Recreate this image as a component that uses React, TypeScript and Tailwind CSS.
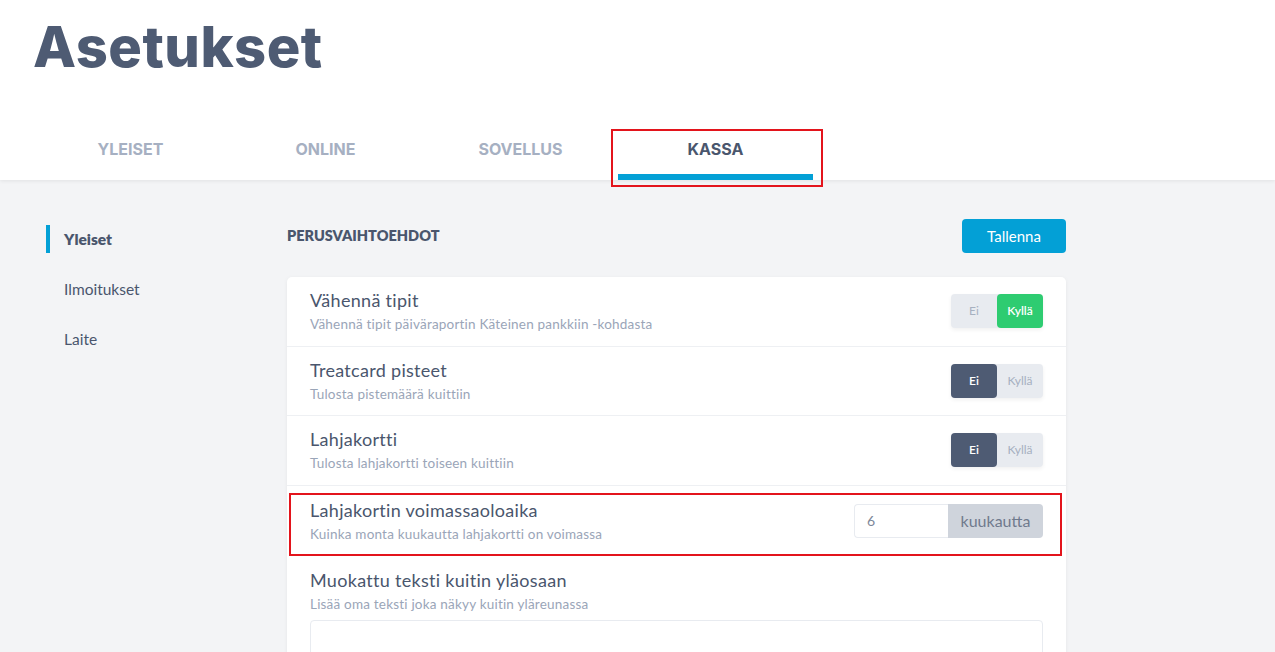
import React from "react";

const Toggle = ({ yes }: { yes: boolean }) => (
  <div className="flex h-[34px] w-[92px] rounded-[4px] bg-[#e8ebf0] text-[12px] shadow-[0_2px_4px_rgba(0,0,0,0.06)]">
    <div
      className={
        "flex w-[46px] items-center justify-center rounded-[4px] " +
        (yes ? "text-[#a6b0c0]" : "bg-[#4e5b73] font-semibold text-white")
      }
    >
      Ei
    </div>
    <div
      className={
        "flex w-[46px] items-center justify-center rounded-[4px] " +
        (yes ? "bg-[#2ecc71] font-semibold text-white" : "text-[#a6b0c0]")
      }
    >
      Kyllä
    </div>
  </div>
);

const Title = ({ children }: { children: React.ReactNode }) => (
  <div className="text-[18px] leading-[22px] tracking-[0.3px] text-[#4a566d]">{children}</div>
);
const Sub = ({ children }: { children: React.ReactNode }) => (
  <div className="mt-[5px] text-[13.5px] leading-[17px] tracking-[0.2px] text-[#9aa5b8]">{children}</div>
);

const Row = ({
  title,
  sub,
  right,
}: {
  title: string;
  sub: string;
  right: React.ReactNode;
}) => (
  <div className="flex h-[69.5px] items-center justify-between border-b border-[#eef0f3] pl-[23px] pr-[23px]">
    <div className="flex flex-col">
      <Title>{title}</Title>
      <Sub>{sub}</Sub>
    </div>
    {right}
  </div>
);

export default function App() {
  return (
    <div
      className="relative h-[652px] w-[1275px] overflow-hidden bg-[#f3f4f6]"
      style={{ fontFamily: "Lato, 'Noto Sans', sans-serif" }}
    >
      <div className="relative z-10 h-[180px] bg-white shadow-[0_1px_4px_rgba(0,0,0,0.08)]">
        <div className="px-[33px] pt-[13px]">
          <h1
            className="text-[56px] font-extrabold leading-[68px] tracking-[0.5px] text-[#4e5b73]"
            style={{ fontFamily: "Inter, 'Noto Sans', sans-serif" }}
          >
            Asetukset
          </h1>
        </div>
        <div className="mt-[49px] flex pl-[33px]" style={{ fontFamily: "Inter, 'Noto Sans', sans-serif" }}>
          {["YLEISET", "ONLINE", "SOVELLUS", "KASSA"].map((t, i) => (
            <div key={t} className="flex h-[50px] w-[195px] flex-col items-center justify-between">
              <div
                className={
                  "pt-[7px] text-[16px] font-bold " +
                  (i === 3 ? "text-[#4a566d]" : "text-[#a6b0c2]")
                }
              >
                {t}
              </div>
              <div className={"h-[6px] w-full " + (i === 3 ? "bg-[#03a0d6]" : "")} />
            </div>
          ))}
        </div>
        <div className="absolute left-[611px] top-[129px] h-[58px] w-[212px] border-2 border-[#e3141c]" />
      </div>

      <div className="flex">
        <div className="w-[287px] shrink-0 pl-[46px] pt-[45px]">
          <div className="flex h-[28px] items-center border-l-[4px] border-[#03a0d6] pl-[14px] pt-[2px] text-[15.5px] font-extrabold text-[#4a566d]">
            Yleiset
          </div>
          <div className="mt-[22px] flex h-[28px] items-center pl-[18px] pt-[2px] text-[15.5px] text-[#4a566d]">
            Ilmoitukset
          </div>
          <div className="mt-[22px] flex h-[28px] items-center pl-[18px] pt-[2px] text-[15.5px] text-[#4a566d]">
            Laite
          </div>
        </div>

        <div className="w-[779px] pt-[39px]">
          <div className="flex items-center justify-between">
            <div className="text-[14.5px] font-extrabold text-[#4a566d]">PERUSVAIHTOEHDOT</div>
            <button className="h-[34px] w-[104px] rounded-[4px] bg-[#03a0d6] text-[15px] text-white">
              Tallenna
            </button>
          </div>

          <div className="relative mt-[24px] rounded-[5px] bg-white shadow-[0_1px_4px_rgba(0,0,0,0.06)]">
            <Row
              title="Vähennä tipit"
              sub="Vähennä tipit päiväraportin Käteinen pankkiin -kohdasta"
              right={<Toggle yes />}
            />
            <Row title="Treatcard pisteet" sub="Tulosta pistemäärä kuittiin" right={<Toggle yes={false} />} />
            <Row title="Lahjakortti" sub="Tulosta lahjakortti toiseen kuittiin" right={<Toggle yes={false} />} />
            <div className="relative flex h-[70px] items-center justify-between px-[23px]">
              <div className="flex flex-col">
                <Title>Lahjakortin voimassaoloaika</Title>
                <Sub>Kuinka monta kuukautta lahjakortti on voimassa</Sub>
              </div>
              <div className="flex h-[34px]">
                <div className="flex w-[94px] items-center rounded-l-[4px] border border-r-0 border-[#e8ebf0] pl-[12px] text-[14px] text-[#7d8799]">
                  6
                </div>
                <div className="flex w-[95px] items-center justify-center rounded-r-[4px] bg-[#cfd4dc] text-[16px] text-[#6f7a8d]">
                  kuukautta
                </div>
              </div>
              <div className="absolute left-[2px] right-[4px] top-[7px] h-[63px] border-2 border-[#e3141c]" />
            </div>
            <div className="px-[23px] pt-[13px] pb-[40px]">
              <Title>Muokattu teksti kuitin yläosaan</Title>
              <Sub>Lisää oma teksti joka näkyy kuitin yläreunassa</Sub>
              <div className="mt-[7px] h-[80px] rounded-[4px] border border-[#e8ebf0]" />
            </div>
          </div>
        </div>
      </div>
    </div>
  );
}
